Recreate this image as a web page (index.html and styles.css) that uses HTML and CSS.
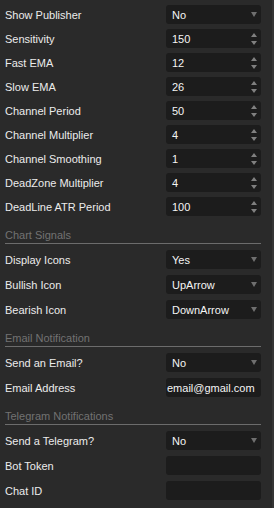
FILE: index.html
```html
<!DOCTYPE html>
<html lang="en">

<head>
    <meta charset="utf-8">
    <title>Indicator Settings</title>
    <link rel="stylesheet" href="styles.css">
</head>

<body>
    <section class="panel">
        <div class="row"><label>Show Publisher</label><div class="field valg"><span>No</span><i class="pil"></i></div></div>
        <div class="row"><label>Sensitivity</label><div class="field tal"><span>150</span><i class="spin"></i></div></div>
        <div class="row"><label>Fast EMA</label><div class="field tal"><span>12</span><i class="spin"></i></div></div>
        <div class="row"><label>Slow EMA</label><div class="field tal"><span>26</span><i class="spin"></i></div></div>
        <div class="row"><label>Channel Period</label><div class="field tal"><span>50</span><i class="spin"></i></div></div>
        <div class="row"><label>Channel Multiplier</label><div class="field tal"><span>4</span><i class="spin"></i></div></div>
        <div class="row"><label>Channel Smoothing</label><div class="field tal"><span>1</span><i class="spin"></i></div></div>
        <div class="row"><label>DeadZone Multiplier</label><div class="field tal"><span>4</span><i class="spin"></i></div></div>
        <div class="row"><label>DeadLine ATR Period</label><div class="field tal"><span>100</span><i class="spin"></i></div></div>

        <h4>Chart Signals</h4>
        <div class="row"><label>Display Icons</label><div class="field valg"><span>Yes</span><i class="pil"></i></div></div>
        <div class="row"><label>Bullish Icon</label><div class="field valg"><span>UpArrow</span><i class="pil"></i></div></div>
        <div class="row"><label>Bearish Icon</label><div class="field valg"><span>DownArrow</span><i class="pil"></i></div></div>

        <h4>Email Notification</h4>
        <div class="row"><label>Send an Email?</label><div class="field valg"><span>No</span><i class="pil"></i></div></div>
        <div class="row"><label>Email Address</label><div class="field tekst"><span>email@gmail.com</span></div></div>

        <h4>Telegram Notifications</h4>
        <div class="row"><label>Send a Telegram?</label><div class="field valg"><span>No</span><i class="pil"></i></div></div>
        <div class="row"><label>Bot Token</label><div class="field tekst"></div></div>
        <div class="row"><label>Chat ID</label><div class="field tekst"></div></div>
    </section>
</body>

</html>
```

FILE: styles.css
```css
html,
body {
    margin: 0;
    height: 100%;
    background: #2a2a2a;
}

body {
    font-family: 'Liberation Sans', Arial, sans-serif;
    font-size: 11px;
}

.panel {
    box-sizing: border-box;
    min-height: 100%;
    padding: 5px 11px 0 5px;
    border-right: 2px solid #353535;
}

.row {
    display: flex;
    align-items: center;
    justify-content: space-between;
    margin-bottom: 5px;
}

/* rækkerne under overskrifterne står lidt luftigere */
h4 ~ .row {
    margin-bottom: 6px;
}

label {
    color: #ececec;
}

.field {
    display: flex;
    align-items: center;
    justify-content: space-between;
    box-sizing: border-box;
    width: 95px;
    height: 19px;
    padding: 0 4px 0 6px;
    border-radius: 3px;
    background: #1c1c1c;
    color: #f4f4f4;
}

.tekst {
    padding-left: 1px;
}

/* nedadpil i select */
.pil {
    width: 0;
    height: 0;
    border-left: 3px solid transparent;
    border-right: 3px solid transparent;
    border-top: 5px solid #6f6f6f;
}

/* op/ned pile i tal-felter */
.spin {
    display: flex;
    flex-direction: column;
    gap: 4px;
}

.spin::before,
.spin::after {
    content: "";
    width: 0;
    height: 0;
    border-left: 3px solid transparent;
    border-right: 3px solid transparent;
}

.spin::before {
    border-bottom: 4px solid #808080;
}

.spin::after {
    border-top: 4px solid #808080;
}

h4 {
    margin: 12px 0 6px;
    padding-bottom: 1px;
    border-bottom: 1px solid #6c6c6c;
    font-size: 11px;
    font-weight: 400;
    line-height: 14px;
    color: #727272;
}
```
